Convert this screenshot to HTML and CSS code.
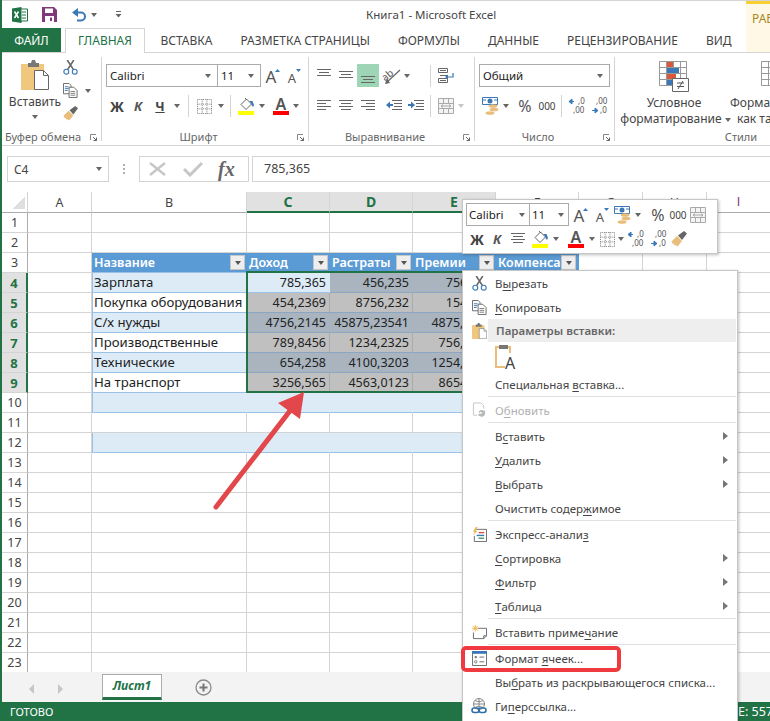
FILE: index.html
```html
<!DOCTYPE html>
<html lang="ru">
<head>
<meta charset="utf-8">
<title>Книга1 - Microsoft Excel</title>
<link rel="stylesheet" href="styles.css">
</head>
<body>
<svg class="defs" width="0" height="0">
  <symbol id="scissors" viewBox="0 0 16 16"><path d="M4.5 0 11 10M11.5 0 5 10" fill="none" stroke="#666" stroke-width="1.7"/><circle cx="3.5" cy="12.5" r="2.6" fill="none" stroke="#3b78b8" stroke-width="1.2"/><circle cx="12.5" cy="12.5" r="2.6" fill="none" stroke="#3b78b8" stroke-width="1.2"/></symbol>
  <symbol id="copy" viewBox="0 0 16 16"><path d="M.5.5h6l2 2v9h-8z" fill="#fff" stroke="#666"/><path d="M2 4h4M2 6h4M2 8h3" stroke="#3b78b8"/><path d="M6.5 4.5h5l3.500 3.500v7.500h-8.500z" fill="#fff" stroke="#666"/><path d="M8 9h5M8 11h5M8 13h5" stroke="#777"/></symbol>
  <symbol id="brush" viewBox="0 0 16 16"><path d="M.5 10.500 6 5l5 5-4.500 5.500-2-1.500-1 .5-.5-1.500-1.500-.5z" fill="#e9bd7b"/><path d="M7 4.500 13 0l3 2.500-5 6.500z" fill="#666"/></symbol>
  <symbol id="fill" viewBox="0 0 17 18"><path d="M3 7.500 8.500 2l5 5-5.500 5.500z" fill="#fff" stroke="#666"/><path d="M7 1l2 2" stroke="#666"/><path d="M11 4h3.500l1.500 4-1 2-1.500-2-.5-2z" fill="#3b78b8"/><rect x="0" y="14" width="16" height="4" fill="#ffff00"/></symbol>
  <symbol id="borders" viewBox="0 0 16 16"><path d="M.5.500h15v15H.5zM.5 5.500h15M.5 10.500h15M5.500.500v15M10.500.500v15" fill="none" stroke="#777" stroke-dasharray="1 1"/></symbol>
  <symbol id="al-top" viewBox="0 0 16 16"><path d="M1 1.500h14M3 4.500h10M1 7.500h14" stroke="#666" fill="none"/></symbol>
  <symbol id="al-mid" viewBox="0 0 16 16"><path d="M1 3.500h14M3 6.500h10M1 9.500h14" stroke="#666" fill="none"/></symbol>
  <symbol id="al-bot" viewBox="0 0 16 16"><path d="M1 8.500h14M3 11.500h10M1 14.500h14" stroke="#666" fill="none"/></symbol>
  <symbol id="al-l" viewBox="0 0 16 16"><path d="M1 2.500h14M1 5.500h9M1 8.500h14M1 11.500h9" stroke="#666" fill="none"/></symbol>
  <symbol id="al-c" viewBox="0 0 16 16"><path d="M1 2.500h14M3 5.500h10M1 8.500h14M3 11.500h10" stroke="#666" fill="none"/></symbol>
  <symbol id="al-r" viewBox="0 0 16 16"><path d="M1 2.500h14M6 5.500h9M1 8.500h14M6 11.500h9" stroke="#666" fill="none"/></symbol>
  <symbol id="ind-l" viewBox="0 0 16 14"><path d="M6 1.500h10M8 4.500h8M8 7.500h8M6 10.500h10" stroke="#666" fill="none"/><path d="M0 6l4-3.500V5h3v2H4v2.500z" fill="#3b78b8"/></symbol>
  <symbol id="ind-r" viewBox="0 0 16 14"><path d="M6 1.500h10M8 4.500h8M8 7.500h8M6 10.500h10" stroke="#666" fill="none"/><path d="M7 6 3 2.500V5H0v2h3v2.500z" fill="#3b78b8"/></symbol>
  <symbol id="wrap" viewBox="0 0 16 16"><path d="M.5.500h9v4h-9zM.5 10.500h9v4h-9z" fill="#fff" stroke="#666"/><path d="M2 2.500h6M2 12.500h6M2 7.500h8" stroke="#666"/><path d="M15 5v4h-7" fill="none" stroke="#3b78b8" stroke-width="1.200"/><path d="M10 6.500 7 9l3 2.500z" fill="#3b78b8"/></symbol>
  <symbol id="merge" viewBox="0 0 16 16"><path d="M.5.500h15v15H.5zM.5 5.500h15M.5 10.500h15M5.500.500v5M10.500.500v5M5.500 10.500v5M10.500 10.500v5" fill="#f4f4f4" stroke="#aaa"/><path d="M3 8h10M3 8l2-1.500M3 8l2 1.500M13 8l-2-1.500M13 8l-2 1.500" stroke="#aaa" fill="none"/></symbol>
  <symbol id="currency" viewBox="0 0 17 18"><path d="M.5.500h15v7h-15z" fill="#fff" stroke="#3b78b8"/><circle cx="8" cy="4" r="2.500" fill="#3b78b8"/><path d="M0 3h4M12 3h4" stroke="#3b78b8"/><ellipse cx="11" cy="9" rx="4.500" ry="1.800" fill="#e9bd7b"/><ellipse cx="12" cy="12.500" rx="4.500" ry="1.800" fill="#e9bd7b"/><ellipse cx="8" cy="16" rx="4.500" ry="1.800" fill="#e9bd7b"/></symbol>
  <symbol id="clip" viewBox="0 0 28 30"><path d="M0 4h23v26H0z" fill="#efc77f"/><path d="M7 3h3l1-3h3l1 3h3v4H7z" fill="#777"/><path d="M13.500 10.500h9l5 5v14h-14z" fill="#fff" stroke="#666"/><path d="M22.500 10.500v5h5" fill="none" stroke="#666"/></symbol>
  <symbol id="refresh" viewBox="0 0 16 16"><path d="M1.500.500h8l3 3v3M1.500.500v13h4" fill="none" stroke="#c4c4c4"/><path d="M7 11a3.500 3.500 0 0 1 6-2l1-1v4h-4l1-1a2 2 0 0 0-3 0zM14 12a3.500 3.500 0 0 1-6 2l-1 1v-3" fill="#b8b8b8"/></symbol>
  <symbol id="flash" viewBox="0 0 16 16"><path d="M4.500 2.500h11v13h-13v-6" fill="#fff" stroke="#666"/><path d="M4 0 1 5h2L1 9l5-5H4l2-4z" fill="#eeb64f"/><path d="M7 6h6" stroke="#d9573a" stroke-width="1.500"/><path d="M5 9h8" stroke="#3b78b8" stroke-width="1.500"/><path d="M7 12h6" stroke="#4c9a6b" stroke-width="1.500"/></symbol>
  <symbol id="note" viewBox="0 0 16 16"><path d="M6 3.500h9.500v8l-3 3H1.500V8" fill="#fff" stroke="#666"/><path d="M12.500 14.500v-3h3" fill="none" stroke="#666"/><path d="M3.500 0v7M0 3.500h7M1 1l5 5M6 1 1 6" stroke="#eeb64f"/></symbol>
  <symbol id="cellfmt" viewBox="0 0 16 16"><path d="M.5.500h15v15H.5z" fill="#fff" stroke="#666"/><path d="M0 0h16v3H0z" fill="#3b78b8"/><path d="M8 6.500h5M8 11.500h5" stroke="#666"/><circle cx="4" cy="6.500" r="1.300" fill="#777"/><circle cx="4" cy="11.500" r="1.300" fill="none" stroke="#777"/></symbol>
  <symbol id="link" viewBox="0 0 16 16"><circle cx="8" cy="6" r="5.500" fill="none" stroke="#888"/><path d="M8 .5v11M2.500 6h11M4 2.500c3 1.500 5 1.500 8 0M4 9.500c3-1.500 5-1.500 8 0" fill="none" stroke="#888"/><rect x="1" y="10" width="7" height="4.500" rx="2.200" fill="none" stroke="#2f6ea8" stroke-width="1.600"/><rect x="8" y="10" width="7" height="4.500" rx="2.200" fill="none" stroke="#2f6ea8" stroke-width="1.600"/></symbol>
  <symbol id="launch" viewBox="0 0 7 7"><path d="M.5 6V.5H6" fill="none" stroke="#888"/><path d="M3 3l3.500 3.500M6.500 3.500v3h-3" fill="none" stroke="#666"/></symbol>
  <symbol id="tri-up" viewBox="0 0 16 16"><path d="M11 4l2.500-3 2.500 3z" fill="#3b78b8"/></symbol>
  <symbol id="tri-down" viewBox="0 0 16 16"><path d="M10 1h5l-2.500 3z" fill="#3b78b8"/></symbol>
  <symbol id="arr-up" viewBox="0 0 16 16"><path d="M0 3.500h5M0 3.500l3-2.500v5z" fill="#3b78b8" stroke="#3b78b8"/></symbol>
  <symbol id="arr-down" viewBox="0 0 16 16"><path d="M1 12.500h6M7 12.500l-3-2.500v5z" fill="#3b78b8" stroke="#3b78b8"/></symbol>
</svg>

<div class="window">
  <header class="titlebar">
    <div class="qat">
      <svg class="q-excel" width="16" height="16" viewBox="0 0 16 16"><path d="M8 2h7.500v12H8z" fill="#fff" stroke="#217346"/><path d="M10 5h4M10 8h4M10 11h4" stroke="#217346"/><path d="M0 1.500 9.500 0v16L0 14.500z" fill="#217346"/><path d="M2.500 4.500 6.500 11M6.500 4.500 2.500 11" stroke="#fff" stroke-width="1.500"/></svg>
      <svg class="q-save" width="15" height="15" viewBox="0 0 15 15"><path d="M0 0h12l3 3v12H0z" fill="#80397b"/><path d="M3 1.500h8V6H3z" fill="#fff"/><path d="M3 9h9v6H3z" fill="#fff"/><path d="M8 10.500h2V14H8z" fill="#80397b"/></svg>
      <svg class="q-undo" width="15" height="14" viewBox="0 0 15 14"><path d="M2 4.500h7a4 4 0 0 1 0 8H5" fill="none" stroke="#3b78b8" stroke-width="2"/><path d="M6 0 0 4.500 6 9z" fill="#3b78b8"/></svg>
      <span class="dd w10 q-dd"></span>
      <svg class="q-more" width="7" height="7" viewBox="0 0 7 7"><path d="M1 .5h5" stroke="#666"/><path d="M.5 3h6L3.500 6.500z" fill="#666"/></svg>
    </div>
    <div class="title">Книга1 - Microsoft Excel</div>
    <div class="ctx-head">РАБ</div>
  </header>

  <nav class="tabs">
    <div class="tab-file">ФАЙЛ</div>
    <div class="tab-home">ГЛАВНАЯ</div>
    <div class="tab">ВСТАВКА</div>
    <div class="tab">РАЗМЕТКА СТРАНИЦЫ</div>
    <div class="tab">ФОРМУЛЫ</div>
    <div class="tab">ДАННЫЕ</div>
    <div class="tab">РЕЦЕНЗИРОВАНИЕ</div>
    <div class="tab">ВИД</div>
    <div class="tab-ctx"></div>
  </nav>

  <section class="ribbon">
    <div class="group g-clip">
      <div class="g-body clip-body">
        <div class="paste">
          <svg width="28" height="30"><use href="#clip"/></svg>
          <span class="paste-label">Вставить</span>
          <span class="dd"></span>
        </div>
        <div class="clip-tools">
          <svg width="15" height="15"><use href="#scissors"/></svg>
          <div class="row-plain"><svg width="15" height="15"><use href="#copy"/></svg><span class="dd w12"></span></div>
          <svg width="15" height="15"><use href="#brush"/></svg>
        </div>
      </div>
      <div class="g-label"><span>Буфер обмена</span><svg class="launch" width="7" height="7"><use href="#launch"/></svg></div>
    </div>

    <div class="group g-font">
      <div class="g-body">
        <div class="row r1">
          <div class="combo w112">Calibri<span class="dd"></span></div>
          <div class="combo w44 joined">11<span class="dd"></span></div>
          <span class="t w22"><svg width="16" height="16" viewBox="0 0 16 16"><text x="7" y="15" class="sb">A</text><use href="#tri-up" width="16" height="16"/></svg></span>
          <span class="t w22"><svg width="16" height="16" viewBox="0 0 16 16"><text x="6" y="15" class="sc">A</text><use href="#tri-down" width="16" height="16"/></svg></span>
        </div>
        <div class="row r2">
          <span class="t w22 cmd-b">Ж</span><span class="t w20 cmd-i">К</span><span class="t w24 cmd-u">Ч</span><span class="t w10 dd"></span>
          <i class="sep ml6"></i>
          <span class="t w23 ml4"><svg width="15" height="15"><use href="#borders"/></svg></span><span class="t w10 dd"></span>
          <i class="sep ml4"></i>
          <span class="t w23 ml4"><svg width="17" height="18"><use href="#fill"/></svg></span><span class="t w8 dd"></span>
          <span class="t w22 ml4"><svg width="17" height="18" viewBox="0 0 17 18"><text x="8" y="13" class="sa">A</text><rect x="0" y="14" width="16" height="4" fill="#f00"/></svg></span><span class="t w8 dd"></span>
        </div>
      </div>
      <div class="g-label"><span>Шрифт</span><svg class="launch" width="7" height="7"><use href="#launch"/></svg></div>
    </div>

    <div class="group g-align">
      <div class="g-body">
        <div class="row r1">
          <span class="t w22"><svg width="16" height="16"><use href="#al-top"/></svg></span>
          <span class="t w22"><svg width="16" height="16"><use href="#al-mid"/></svg></span>
          <span class="t w22 on"><svg width="16" height="16"><use href="#al-bot"/></svg></span>
          <span class="t w24"><svg width="24" height="20" viewBox="0 0 24 20"><text x="3" y="13" class="sd" transform="rotate(-40 8 10)">ab</text><path d="M7 17 21 4" stroke="#666" stroke-width="1.200"/><path d="M8 12l-2 6 5-1z" fill="#666"/></svg></span><span class="t w8 dd"></span>
          <i class="sep ml19"></i>
          <span class="t w22 ml4"><svg width="16" height="16"><use href="#wrap"/></svg></span>
        </div>
        <div class="row r2">
          <span class="t w22"><svg width="16" height="16"><use href="#al-l"/></svg></span>
          <span class="t w22"><svg width="16" height="16"><use href="#al-c"/></svg></span>
          <span class="t w22"><svg width="16" height="16"><use href="#al-r"/></svg></span>
          <span class="t w22 ml4"><svg width="16" height="14"><use href="#ind-l"/></svg></span>
          <span class="t w22"><svg width="16" height="14"><use href="#ind-r"/></svg></span>
          <i class="sep ml3"></i>
          <span class="t w22 ml4"><svg width="16" height="16"><use href="#merge"/></svg></span><span class="t w8 dd pale"></span>
        </div>
      </div>
      <div class="g-label"><span>Выравнивание</span><svg class="launch" width="7" height="7"><use href="#launch"/></svg></div>
    </div>

    <div class="group g-num">
      <div class="g-body">
        <div class="row r1">
          <div class="combo w131">Общий<span class="dd"></span></div>
        </div>
        <div class="row r2">
          <span class="t w22"><svg width="17" height="18"><use href="#currency"/></svg></span><span class="t w10 dd"></span>
          <span class="t w24 ml2 pct">%</span><span class="t w20 th">000</span>
          <i class="sep ml4"></i>
          <span class="t w22 ml4"><svg width="16" height="16" viewBox="0 0 16 16"><text x="9" y="6" class="se">,0</text><text x="4" y="15" class="se">,00</text><use href="#arr-up" width="16" height="16"/></svg></span>
          <span class="t w22"><svg width="16" height="16" viewBox="0 0 16 16"><text x="5" y="6" class="se">,00</text><text x="9" y="15" class="se">,0</text><use href="#arr-down" width="16" height="16"/></svg></span>
        </div>
      </div>
      <div class="g-label"><span>Число</span><svg class="launch" width="7" height="7"><use href="#launch"/></svg></div>
    </div>

    <div class="group g-styles">
      <div class="g-body styles-body">
        <div class="style-btn sb1">
          <svg width="30" height="31" viewBox="0 0 30 31"><path d="M.5.500h27v24H.5zM.5 6.500h27M.5 12.500h27M.5 18.500h27M7.500.500v24M14.500.500v24M21.500.500v24" fill="#fff" stroke="#999"/><path d="M8 1h6v5H8z" fill="#d9573a"/><path d="M8 7h12v5H8z" fill="#3b78b8"/><path d="M8 13h9v5H8z" fill="#d9573a"/><path d="M8 19h6v5H8z" fill="#3b78b8"/><path d="M13.500 17.500h16v13h-16z" fill="#fff" stroke="#666"/><path d="M18 22h7M18 25.500h7M24 20l-5 8" stroke="#555" fill="none"/></svg>
          <span>Условное</span>
          <span class="nowrap">форматирование<i class="dd inl"></i></span>
        </div>
        <div class="style-btn sb2">
          <svg width="30" height="31" viewBox="0 0 30 31"><path d="M.5.500h27v24H.5zM.5 6.500h27M.5 12.500h27M.5 18.500h27M7.500.500v24M14.500.500v24M21.500.500v24" fill="#fff" stroke="#999"/></svg>
          <span>Формат</span>
          <span class="nowrap">как таблицу</span>
        </div>
      </div>
      <div class="g-label"><span>Стили</span></div>
    </div>
  </section>

  <section class="formula">
    <div class="namebox">C4<span class="dd"></span></div>
    <div class="grip"></div>
    <div class="fxbox">
      <svg width="20" height="16" viewBox="0 0 20 16"><path d="M2 2l15 12M17 2 2 14" stroke="#c6c6c6" stroke-width="2.400"/></svg>
      <svg width="20" height="16" viewBox="0 0 20 16"><path d="M1 8l6 6L19 2" fill="none" stroke="#c6c6c6" stroke-width="3"/></svg>
      <span class="fx">fx</span>
    </div>
    <div class="finput">785,365</div>
  </section>

  <main class="sheet">
    <table class="grid">
      <colgroup><col class="c-h"><col class="c-a"><col class="c-b"><col class="c-n"><col class="c-n"><col class="c-n"><col class="c-n"><col class="c-a"><col class="c-a"><col class="c-a"></colgroup>
      <thead>
        <tr><th class="corner"></th><th>A</th><th>B</th><th class="sel">C</th><th class="sel">D</th><th class="sel">E</th><th>F</th><th>G</th><th>H</th><th class="i">I</th></tr>
      </thead>
      <tbody>
        <tr><th>1</th><td></td><td></td><td></td><td></td><td></td><td></td><td></td><td></td><td></td></tr>
        <tr><th>2</th><td></td><td></td><td></td><td></td><td></td><td></td><td></td><td></td><td></td></tr>
        <tr><th>3</th><td></td><td class="hd">Название<b class="flt"></b></td><td class="hd">Доход<b class="flt"></b></td><td class="hd">Растраты<b class="flt"></b></td><td class="hd">Премии<b class="flt"></b></td><td class="hd last">Компенса<b class="flt"></b></td><td></td><td></td><td></td></tr>
        <tr class="band"><th class="rsel">4</th><td></td><td class="tb">Зарплата</td><td class="num">785,365</td><td class="num gb">456,235</td><td class="num gb">756,236</td><td class="last"></td><td></td><td></td><td></td></tr>
        <tr class="plain"><th class="rsel">5</th><td></td><td class="tb">Покупка оборудования</td><td class="num gp">454,2369</td><td class="num gp">8756,232</td><td class="num gp">1542,36</td><td class="last"></td><td></td><td></td><td></td></tr>
        <tr class="band"><th class="rsel">6</th><td></td><td class="tb">С/х нужды</td><td class="num gb">4756,2145</td><td class="num gb">45875,23541</td><td class="num gb">4875,2145</td><td class="last"></td><td></td><td></td><td></td></tr>
        <tr class="plain"><th class="rsel">7</th><td></td><td class="tb">Производственные</td><td class="num gp">789,8456</td><td class="num gp">1234,2325</td><td class="num gp">756,2365</td><td class="last"></td><td></td><td></td><td></td></tr>
        <tr class="band"><th class="rsel">8</th><td></td><td class="tb">Технические</td><td class="num gb">654,258</td><td class="num gb">4100,3203</td><td class="num gb">1254,2365</td><td class="last"></td><td></td><td></td><td></td></tr>
        <tr class="plain"><th class="rsel">9</th><td></td><td class="tb">На транспорт</td><td class="num gp">3256,565</td><td class="num gp">4563,0123</td><td class="num gp">8654,125</td><td class="last"></td><td></td><td></td><td></td></tr>
        <tr class="band"><th>10</th><td></td><td class="tb nov"></td><td class="nov"></td><td class="nov"></td><td class="nov"></td><td class="last"></td><td></td><td></td><td></td></tr>
        <tr><th>11</th><td></td><td></td><td></td><td></td><td></td><td></td><td></td><td></td><td></td></tr>
        <tr class="band"><th>12</th><td></td><td class="tb nov"></td><td class="nov"></td><td class="nov"></td><td class="nov"></td><td class="last"></td><td></td><td></td><td></td></tr>
        <tr><th>13</th><td></td><td></td><td></td><td></td><td></td><td></td><td></td><td></td><td></td></tr>
        <tr><th>14</th><td></td><td></td><td></td><td></td><td></td><td></td><td></td><td></td><td></td></tr>
        <tr><th>15</th><td></td><td></td><td></td><td></td><td></td><td></td><td></td><td></td><td></td></tr>
        <tr><th>16</th><td></td><td></td><td></td><td></td><td></td><td></td><td></td><td></td><td></td></tr>
        <tr><th>17</th><td></td><td></td><td></td><td></td><td></td><td></td><td></td><td></td><td></td></tr>
        <tr><th>18</th><td></td><td></td><td></td><td></td><td></td><td></td><td></td><td></td><td></td></tr>
        <tr><th>19</th><td></td><td></td><td></td><td></td><td></td><td></td><td></td><td></td><td></td></tr>
        <tr><th>20</th><td></td><td></td><td></td><td></td><td></td><td></td><td></td><td></td><td></td></tr>
        <tr><th>21</th><td></td><td></td><td></td><td></td><td></td><td></td><td></td><td></td><td></td></tr>
        <tr><th>22</th><td></td><td></td><td></td><td></td><td></td><td></td><td></td><td></td><td></td></tr>
        <tr><th>23</th><td></td><td></td><td></td><td></td><td></td><td></td><td></td><td></td><td></td></tr>
      </tbody>
    </table>
    <div class="selection"></div>
  </main>

  <section class="sheetbar">
    <svg class="nav" width="34" height="10" viewBox="0 0 34 10"><path d="M5 0v10L0 5zM29 0v10l5-5z" fill="#c6c6c6"/></svg>
    <div class="sheet-tab">Лист1</div>
    <svg class="plus" width="17" height="17" viewBox="0 0 17 17"><circle cx="8.500" cy="8.500" r="7.500" fill="none" stroke="#8a8a8a" stroke-width="1.300"/><path d="M8.500 4.500v8M4.500 8.500h8" stroke="#777" stroke-width="2"/></svg>
  </section>

  <footer class="status"><span>ГОТОВО</span><span class="st-r">Е: 557</span></footer>

  <svg class="arrow" width="100" height="125" viewBox="0 0 100 125"><path d="M6 118 86 14" stroke="#e1474b" stroke-width="5" stroke-linecap="round"/><path d="M94 3 90 30 68 14z" fill="#e1474b"/></svg>

  <div class="mini">
    <div class="mini-row m1">
      <div class="combo mw64">Calibri<span class="dd"></span></div>
      <div class="combo mw40 joined">11<span class="dd"></span></div>
      <span class="t w22"><svg width="16" height="16" viewBox="0 0 16 16"><text x="7" y="15" class="sb">A</text><use href="#tri-up" width="16" height="16"/></svg></span>
      <span class="t w22"><svg width="16" height="16" viewBox="0 0 16 16"><text x="6" y="15" class="sc">A</text><use href="#tri-down" width="16" height="16"/></svg></span>
      <span class="t w18"><svg width="17" height="18"><use href="#currency"/></svg></span><span class="t w10 dd ml2"></span>
      <span class="t w22 pct m-pct">%</span><span class="t w18 th">000</span>
      <span class="t w22"><svg width="16" height="16"><use href="#merge"/></svg></span>
    </div>
    <div class="mini-row m2">
      <span class="t w20 cmd-b">Ж</span><span class="t w20 cmd-i">К</span>
      <span class="t w22"><svg width="16" height="16"><use href="#al-c"/></svg></span>
      <span class="t w22"><svg width="17" height="18"><use href="#fill"/></svg></span><span class="t w10 dd"></span>
      <span class="t w22 ml4"><svg width="17" height="18" viewBox="0 0 17 18"><text x="8" y="13" class="sa">A</text><rect x="0" y="14" width="16" height="4" fill="#f00"/></svg></span><span class="t w10 dd"></span>
      <span class="t w20"><svg width="15" height="15"><use href="#borders"/></svg></span><span class="t w8 dd"></span>
      <span class="t w22"><svg width="16" height="16" viewBox="0 0 16 16"><text x="9" y="6" class="se">,0</text><text x="4" y="15" class="se">,00</text><use href="#arr-up" width="16" height="16"/></svg></span>
      <span class="t w22"><svg width="16" height="16" viewBox="0 0 16 16"><text x="5" y="6" class="se">,00</text><text x="9" y="15" class="se">,0</text><use href="#arr-down" width="16" height="16"/></svg></span>
      <span class="t w20"><svg width="16" height="16"><use href="#brush"/></svg></span>
    </div>
  </div>

  <div class="menu">
    <div class="mi"><span class="mic"><svg width="15" height="15"><use href="#scissors"/></svg></span>В<u>ы</u>резать</div>
    <div class="mi"><span class="mic"><svg width="15" height="15"><use href="#copy"/></svg></span><u>К</u>опировать</div>
    <div class="mi mhead"><span class="mic"><svg width="15" height="16" viewBox="0 0 28 30"><use href="#clip" width="28" height="30"/></svg></span><span class="mh">Параметры вставки:</span></div>
    <div class="mpaste"><svg width="22" height="24" viewBox="0 0 22 24"><path d="M15 8V2H1v20h9" fill="none" stroke="#e9bd7b" stroke-width="2"/><path d="M4 0h9v4H4z" fill="#777"/><text x="15" y="24" class="sf">A</text></svg></div>
    <div class="mi"><span class="mic"></span>Специальная <u>в</u>ставка...</div>
    <div class="msep"></div>
    <div class="mi off"><span class="mic"><svg width="15" height="16"><use href="#refresh"/></svg></span>О<u>б</u>новить</div>
    <div class="msep"></div>
    <div class="mi sub"><span class="mic"></span>В<u>с</u>тавить</div>
    <div class="mi sub"><span class="mic"></span><u>У</u>далить</div>
    <div class="mi sub"><span class="mic"></span><u>В</u>ыбрать</div>
    <div class="mi"><span class="mic"></span>Очистить содер<u>ж</u>имое</div>
    <div class="msep"></div>
    <div class="mi"><span class="mic"><svg width="15" height="15"><use href="#flash"/></svg></span>Экспресс-анали<u>з</u></div>
    <div class="mi sub"><span class="mic"></span><u>С</u>ортировка</div>
    <div class="mi sub"><span class="mic"></span><u>Ф</u>ильтр</div>
    <div class="mi sub"><span class="mic"></span><u>Т</u>аблица</div>
    <div class="msep"></div>
    <div class="mi"><span class="mic"><svg width="15" height="15"><use href="#note"/></svg></span>Вставить приме<u>ч</u>ание</div>
    <div class="msep"></div>
    <div class="mi"><span class="mic"><svg width="15" height="15"><use href="#cellfmt"/></svg></span>Формат <u>я</u>чеек...</div>
    <div class="mi"><span class="mic"></span>Вы<u>б</u>рать из раскрывающегося списка...</div>
    <div class="mi"><span class="mic"><svg width="16" height="16"><use href="#link"/></svg></span>Ги<u>п</u>ерссылка...</div>
  </div>
  <div class="redbox"></div>
</div>
</body>
</html>
```

FILE: styles.css
```css
* { box-sizing: border-box; }
html, body { margin: 0; padding: 0; height: 100%; }
body { background: #fff; font-family: "Noto Sans", "Open Sans", sans-serif; color: #444; font-size: 12px; }
.defs { position: absolute; }
.window { position: relative; width: 770px; height: 721px; overflow: hidden; border-left: 2px solid #217346; background: #fff; display: flex; flex-direction: column; }
.t svg { overflow: visible; }

/* text inside icons */
.sa, .sb, .sc, .sd, .se, .sf { font-family: "Noto Sans", sans-serif; fill: #555; text-anchor: middle; }
.sa { font-size: 16px; font-weight: 600; }
.sb { font-size: 17px; }
.sc { font-size: 13px; }
.sd { font-size: 10px; text-anchor: start; }
.se { font-size: 8px; text-anchor: start; }
.sf { font-size: 16px; fill: #444; }
.mpaste svg { overflow: visible; }

/* title bar */
.titlebar { height: 28px; flex: none; display: flex; align-items: center; border-top: 1px solid #d4d4d4; position: relative; }
.qat { display: flex; align-items: center; width: 364px; padding-left: 10px; }
.q-save { margin-left: 14px; }
.q-undo { margin-left: 15px; }
.q-dd { margin-left: 2px; }
.q-more { margin-left: 16px; }
.title { font-size: 11.500px; color: #444; white-space: nowrap; }
.ctx-head { position: absolute; left: 744px; top: 0; width: 24px; height: 27px; background: #fff8e6; border-top: 3px solid #f7cf33; color: #a9871f; font-size: 12px; padding: 6px 0 0 6px; overflow: hidden; white-space: nowrap; }

/* tabs */
.tabs { height: 25px; flex: none; display: flex; align-items: stretch; border-bottom: 1px solid #d4d4d4; font-size: 12px; position: relative; }
.tab-file { width: 59px; height: 24px; background: #217346; color: #fff; text-align: center; line-height: 25px; }
.tab-home { width: 80px; height: 25px; margin-left: 4px; border: 1px solid #d4d4d4; border-bottom: 0; background: #fff; color: #217346; text-align: center; line-height: 23px; margin-right: 1px; }
.tab { padding: 0 14px; line-height: 25px; color: #444; white-space: nowrap; }
.tab:nth-child(3) { padding-left: 14.500px; }
.tab-ctx { position: absolute; left: 744px; top: 0; width: 24px; height: 24px; background: #fff8e6; }

/* ribbon */
.ribbon { height: 93px; flex: none; border-bottom: 1px solid #d4d4d4; display: flex; align-items: flex-start; padding-top: 4px; overflow: hidden; }
.group { height: 84px; flex: none; display: flex; flex-direction: column; border-right: 1px solid #d4d4d4; }
.g-clip { width: 100px; }
.g-font { width: 207px; padding-left: 4px; }
.g-align { width: 166px; padding-left: 4px; }
.g-num { width: 140px; padding-left: 4px; }
.g-styles { width: 160px; border-right: 0; }
.g-styles .g-label { padding-left: 92px; }
.g-body { flex: 1; min-height: 0; padding-top: 7px; }
.g-label { height: 12px; flex: none; display: flex; align-items: flex-start; line-height: 16px; color: #666; font-size: 11px; }
.g-label span { flex: 1; text-align: center; white-space: nowrap; }
.launch { flex: none; margin: 5px 4px 0 6px; }
.row { display: flex; align-items: center; }
.r1 { height: 23px; }
.r2 { height: 24px; margin-top: 7px; }
.t { flex: none; display: flex; align-items: center; justify-content: center; height: 23px; }
.w8 { width: 8px; } .w10 { width: 10px; } .w12 { width: 12px; } .w18 { width: 18px; } .w20 { width: 20px; } .w22 { width: 22px; } .w23 { width: 23px; } .w24 { width: 24px; }
.ml2 { margin-left: 2px; } .ml3 { margin-left: 3px; } .ml4 { margin-left: 4px; } .ml6 { margin-left: 6px; } .ml19 { margin-left: 19px; }
.on { background: #9fd5b7; }
.sep { display: block; flex: none; width: 1px; height: 22px; background: #d4d4d4; }
.dd { display: inline-flex; align-items: center; justify-content: center; flex: none; }
.dd::after { content: ""; width: 0; height: 0; border: 3.500px solid transparent; border-top: 4px solid #666; border-bottom: 0; }
.dd.pale::after { border-top-color: #c6c6c6; }
.inl { margin-left: 3px; vertical-align: middle; }
.cmd-b { font-weight: 700; font-size: 14px; color: #444; }
.cmd-i { font-weight: 700; font-style: italic; font-size: 13px; color: #555; }
.cmd-u { font-weight: 700; font-size: 13px; color: #444; text-decoration: underline; }
.pct { font-size: 16px; color: #555; }
.th { font-size: 10px; color: #444; }
.m-pct { margin-left: 4px; }

/* combos */
.combo { flex: none; height: 23px; border: 1px solid #ababab; background: #fff; font-size: 11.500px; color: #222; display: flex; align-items: center; justify-content: space-between; padding: 0 5px 0 3px; white-space: nowrap; }
.combo .dd { width: 9px; }
.joined { margin-left: -1px; }
.w112 { width: 112px; } .w44 { width: 44px; } .w131 { width: 131px; }
.mw64 { width: 64px; } .mw40 { width: 40px; }

/* clipboard */
.clip-body { display: flex; padding-top: 3px; }
.paste { width: 59px; padding-left: 7px; display: flex; flex-direction: column; align-items: center; }
.paste svg { flex: none; }
.paste-label { margin-top: 4px; line-height: 16px; font-size: 12px; }
.paste .dd { margin-top: 5px; }
.clip-tools { display: flex; flex-direction: column; gap: 8px; padding-left: 2px; }
.row-plain { display: flex; align-items: center; }
.row-plain .dd { margin-left: 4px; }

/* styles */
.styles-body { display: flex; padding-top: 4px; font-size: 12px; }
.style-btn { flex: none; display: flex; flex-direction: column; align-items: center; line-height: 16px; white-space: nowrap; }
.style-btn svg { margin-bottom: 3px; flex: none; }
.sb1 { width: 110px; padding-left: 8px; }
.sb1 .nowrap { margin-left: 3px; }
.sb2 { width: 100px; align-items: flex-start; padding-left: 5px; }
.sb2 svg { margin-left: 31px; }
.sb2 span:last-child { margin-left: 7px; }
.nowrap { white-space: nowrap; }

/* formula */
.formula { height: 46px; flex: none; display: flex; align-items: flex-start; padding: 10px 0 0 5px; }
.namebox { width: 102px; height: 26px; border: 1px solid #d4d4d4; display: flex; align-items: center; justify-content: space-between; padding: 0 6px 0 6px; font-size: 12px; color: #444; }
.grip { width: 2px; height: 10px; margin: 8px 14px 0 14px; background: repeating-linear-gradient(#b0b0b0 0 2px, transparent 2px 4px); }
.fxbox { width: 110px; height: 26px; border: 1px solid #d4d4d4; display: flex; align-items: center; gap: 15px; padding-left: 8px; }
.fx { font-family: "Liberation Serif", serif; font-style: italic; font-weight: 700; font-size: 20px; color: #666; line-height: 20px; }
.finput { flex: 1; height: 26px; margin-left: 3px; border: 1px solid #d4d4d4; border-right: 0; padding-left: 11px; line-height: 24px; font-size: 12.500px; color: #444; }

/* sheet */
.sheet { height: 480px; flex: none; position: relative; overflow: hidden; }
.grid { table-layout: fixed; width: 769px; border-collapse: separate; border-spacing: 0; font-size: 12.500px; color: #222; }
.c-h { width: 26px; } .c-a { width: 64px; } .c-b { width: 155px; } .c-n { width: 83px; }
.grid tr { height: 20px; }
.grid th, .grid td { height: 20px; padding: 0; border-right: 1px solid #d4d4d4; border-bottom: 1px solid #d4d4d4; overflow: hidden; white-space: nowrap; position: relative; }
.grid th { font-weight: 400; color: #444; background: #fff; text-align: center; font-size: 12.500px; }
.grid thead th { background: #fff; border-bottom-color: #ababab; }
.corner { background: linear-gradient(135deg, #fff 50%, #dfdfdf 50%) no-repeat 11px 5px / 12px 12px !important; }
.grid thead th.sel { background: #e1e1e1; color: #217346; font-weight: 700; font-size: 14px; border-bottom: 2px solid #217346; }
.grid thead th.i { color: #80397b; font-family: "Liberation Sans", sans-serif; }
.grid tbody th { border-right-color: #ababab; }
.grid tbody th.rsel { background: #e1e1e1; color: #217346; font-weight: 700; border-right: 2px solid #217346; font-size: 13px; }
.hd { background: #5b9bd5; color: #fff; font-weight: 600; padding-left: 2px !important; border-bottom-color: #9bc2e6 !important; border-right: 0 !important; font-size: 12.500px; }
.hd.last { border-right: 1px dashed #5b9bd5 !important; }
.flt { position: absolute; right: 2px; top: 2px; width: 15px; height: 15px; background: #eee; border: 1px solid #c6c6c6; display: flex; align-items: center; justify-content: center; }
.flt::after { content: ""; border: 3.500px solid transparent; border-top: 4px solid #555; border-bottom: 0; }
.grid td.tb { padding: 0 0 1px 1px; border-left: 1px solid #9bc2e6; font-size: 13.200px; line-height: 17px; border-bottom-color: #9bc2e6; }
.band td.tb, .band td.nov, .band td.last { background: #ddebf7; }
.band td.tb, .band td.nov { border-bottom-color: #9bc2e6; border-right-color: #ddebf7; }
.num { text-align: right; padding-right: 3px !important; border-bottom-color: #9bc2e6 !important; }
.band td.num { background: #ddebf7; border-right-color: #ddebf7; }
.band td.gb { background: #a9b4bf; border-right-color: #a9b4bf; border-bottom-color: #8aa6c2 !important; }
.plain td.gp { background: #c0c0c0; border-bottom-color: #8aa6c2 !important; border-right-color: #ababab; }
.last { border-right-color: #9bc2e6 !important; }
.selection { position: absolute; left: 244px; top: 79px; width: 300px; height: 122px; border: 2px solid #217346; }

/* sheet tabs */
.sheetbar { height: 30px; flex: none; background: #f3f3f3; display: flex; align-items: flex-start; padding-top: 2px; }
.nav { margin: 10px 0 0 27px; }
.sheet-tab { width: 60px; height: 26px; margin-left: 39px; background: #fff; border: 1px solid #ababab; border-bottom: 3px solid #217346; color: #217346; font-weight: 700; font-style: italic; text-align: center; line-height: 22px; font-size: 12px; }
.plus { margin: 5px 0 0 33px; }

/* status */
.status { height: 19px; flex: none; background: #217346; color: #fff; display: flex; justify-content: space-between; align-items: center; padding: 0 0 0 8px; font-size: 11px; white-space: nowrap; }
.st-r { width: 32px; overflow: hidden; font-size: 12.500px; }

/* overlays */
.arrow { position: absolute; left: 208px; top: 389px; }
.mini { position: absolute; left: 460px; top: 199px; width: 256px; height: 55px; background: #fff; border: 1px solid #c6c6c6; box-shadow: 1px 1px 3px rgba(0,0,0,.25); padding: 3px 0 0 3px; z-index: 3; }
.mini-row { display: flex; align-items: center; }
.m1 .t { height: 23px; }
.m2 { margin-top: 1px; height: 24px; padding-left: 1px; }
.mini .combo { height: 23px; padding: 0 3px 0 2px; font-size: 11.500px; }
.menu { position: absolute; left: 460px; top: 270px; width: 276px; height: 460px; background: #fff; border: 1px solid #c6c6c6; box-shadow: 1px 1px 3px rgba(0,0,0,.25); z-index: 2; font-size: 11.500px; color: #444; }
.mi { height: 24px; display: flex; align-items: center; white-space: pre; position: relative; }
.mic { width: 32px; flex: none; display: flex; justify-content: center; align-items: center; }
.mi u { text-decoration-thickness: 1px; text-underline-offset: 2px; }
.mhead { height: 23px; margin-bottom: 1px; }
.mh { flex: 1; align-self: stretch; margin-left: -7px; padding-left: 8px; background: #eee; font-weight: 600; color: #666; line-height: 23px; margin-right: 1px; }
.mpaste { height: 29px; padding: 2px 0 0 32px; }
.msep { height: 2px; margin-left: 25px; margin-right: 1px; border-top: 1px solid #e1e1e1; }
.off { color: #b1b1b1; }
.sub::after { content: ""; position: absolute; right: 9px; top: 8px; border: 4px solid transparent; border-left: 5px solid #777; border-right: 0; }
.redbox { position: absolute; left: 459px; top: 646px; width: 160px; height: 26px; border: 4px solid #ef3b3f; border-radius: 5px; z-index: 4; }
```
